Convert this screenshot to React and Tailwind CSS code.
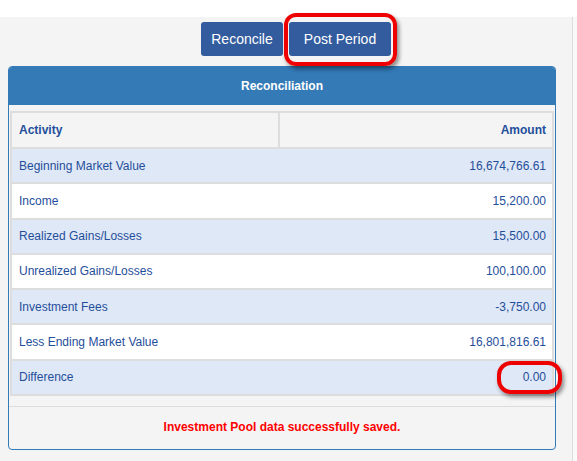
import React from 'react';

const rows = [
  ['Beginning Market Value', '16,674,766.61'],
  ['Income', '15,200.00'],
  ['Realized Gains/Losses', '15,500.00'],
  ['Unrealized Gains/Losses', '100,100.00'],
  ['Investment Fees', '-3,750.00'],
  ['Less Ending Market Value', '16,801,816.61'],
  ['Difference', '0.00'],
];

const App = () => {
  return (
    <div className="relative w-[577px] h-[461px] overflow-hidden bg-[#f4f4f4] font-['Liberation_Sans',Arial,sans-serif]">
      <div className="h-[17px] bg-white" />
      <div className="absolute top-[17px] bottom-0 left-[572px] w-px bg-[#dddddd]" />
      <div className="absolute top-[17px] bottom-0 left-[573px] right-0 bg-[#f9f9f9]" />

      <div className="flex gap-[6px] ml-[201px] mt-[5px]">
        <button className="h-[34px] w-[82px] rounded-[3px] bg-[#335c9e] text-white text-[14px]">Reconcile</button>
        <button className="h-[34px] w-[102px] rounded-[3px] bg-[#335c9e] text-white text-[14px]">Post Period</button>
      </div>

      <div className="ml-[8px] mt-[10px] w-[548px] rounded-[4px] border border-[#337ab7] bg-[#f4f4f4] overflow-hidden">
        <div className="h-[38px] bg-[#337ab7] flex items-center justify-center text-white text-[12px] font-bold">
          Reconciliation
        </div>
        <div className="px-px pt-[6px] pb-[10px]">
          <div className="border-2 border-[#dddddd] bg-[#dddddd] flex flex-col gap-[2px]">
            <div className="flex gap-[2px] h-[34px] text-[12px] font-bold text-[#1f4e9b]">
              <div className="w-[266px] bg-[#f4f4f4] flex items-center pl-[7px]">Activity</div>
              <div className="flex-1 bg-[#f4f4f4] flex items-center justify-end pr-[6px]">Amount</div>
            </div>
            {rows.map(([label, amount], i) => (
              <div
                key={label}
                className={`flex gap-[2px] h-[33.25px] text-[12px] text-[#1f4e9b] ${i % 2 === 0 ? 'bg-[#dfe8f6]' : 'bg-white'}`}
              >
                <div className={`w-[266px] flex items-center pl-[7px] ${i % 2 === 0 ? 'bg-[#dfe8f6]' : 'bg-white'}`}>{label}</div>
                <div className={`flex-1 flex items-center justify-end pr-[6px] ${i % 2 === 0 ? 'bg-[#dfe8f6]' : 'bg-white'}`}>{amount}</div>
              </div>
            ))}
          </div>
        </div>
        <div className="border-t border-[#dddddd] h-[43px] flex items-start pt-[11px] justify-center text-[12px] font-bold text-[#ff0000]">
          Investment Pool data successfully saved.
        </div>
      </div>

      <div className="absolute left-[284px] top-[13px] w-[113px] h-[53px] rounded-[12px] border-[4px] border-[#ee0000] shadow-[2px_3px_4px_rgba(0,0,0,0.45)]" />
      <div className="absolute left-[497px] top-[361px] w-[65px] h-[33px] rounded-[14px] border-[4px] border-[#ee0000] shadow-[2px_3px_4px_rgba(0,0,0,0.45)]" />
    </div>
  );
};

export default App;
